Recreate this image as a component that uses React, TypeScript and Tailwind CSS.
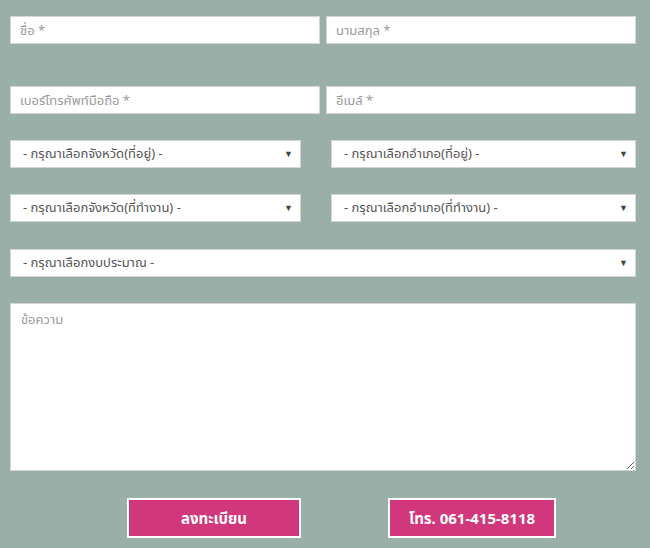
import React from "react";

const font = { fontFamily: '"Noto Sans", "Noto Sans Thai", "Liberation Sans", sans-serif' };

function Field({ placeholder, className }: { placeholder: string; className: string }) {
  return (
    <input
      type="text"
      placeholder={placeholder}
      className={`h-[28px] border border-[#d4d4d4] bg-white px-[9px] text-[13px] text-[#555] placeholder:text-[#9a9a9a] outline-none ${className}`}
    />
  );
}

function Select({ label, className }: { label: string; className: string }) {
  return (
    <div
      className={`flex h-[28px] items-center justify-between border border-[#d4d4d4] bg-white pl-[12px] pr-[7px] text-[13px] text-[#555] ${className}`}
    >
      <span>{label}</span>
      <span className="text-[9px] text-[#444]">▼</span>
    </div>
  );
}

export default function App() {
  return (
    <div className="h-[548px] w-[650px] overflow-hidden bg-[#9bafa9]" style={font}>
      <div className="ml-[10px] flex w-[626px] flex-col pt-[16px]">
        <div className="flex justify-between">
          <Field placeholder="ชื่อ *" className="w-[310px]" />
          <Field placeholder="นามสกุล *" className="w-[310px]" />
        </div>
        <div className="mt-[42px] flex justify-between">
          <Field placeholder="เบอร์โทรศัพท์มือถือ *" className="w-[310px]" />
          <Field placeholder="อีเมล์ *" className="w-[310px]" />
        </div>
        <div className="mt-[26px] flex justify-between">
          <Select label="- กรุณาเลือกจังหวัด(ที่อยู่) -" className="w-[291px]" />
          <Select label="- กรุณาเลือกอำเภอ(ที่อยู่) -" className="w-[305px]" />
        </div>
        <div className="mt-[26px] flex justify-between">
          <Select label="- กรุณาเลือกจังหวัด(ที่ทำงาน) -" className="w-[291px]" />
          <Select label="- กรุณาเลือกอำเภอ(ที่ทำงาน) -" className="w-[305px]" />
        </div>
        <Select label="- กรุณาเลือกงบประมาณ -" className="mt-[27px] w-[626px]" />
        <textarea
          placeholder="ข้อความ"
          className="mt-[26px] h-[168px] w-[626px] resize border border-[#d4d4d4] bg-white px-[10px] py-[6px] text-[13px] text-[#555] placeholder:text-[#9a9a9a] outline-none"
        />
        <div className="mt-[27px] flex">
          <button
            type="button"
            className="ml-[117px] h-[40px] w-[174px] border-2 border-white bg-[#d1387b] text-[15px] font-bold text-white"
          >
            ลงทะเบียน
          </button>
          <button
            type="button"
            className="ml-[87px] h-[40px] w-[168px] border-2 border-white bg-[#d1387b] text-[15px] font-bold text-white"
          >
            โทร. 061-415-8118
          </button>
        </div>
      </div>
    </div>
  );
}
